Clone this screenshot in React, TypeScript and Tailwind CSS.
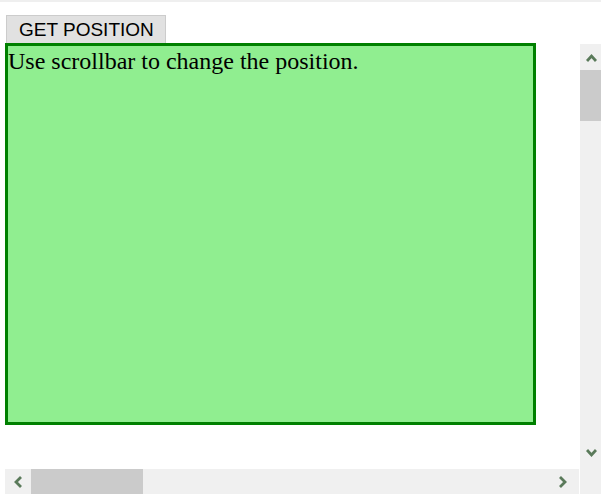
import React from "react";

const A = "#5a7a5a";

function Chev({ dir }: { dir: "up" | "down" | "left" | "right" }) {
  const pts: Record<string, string> = {
    up: "1,8 5.5,3 10,8",
    down: "1,2 5.5,7 10,2",
    left: "7,1 2,6 7,11",
    right: "2,1 7,6 2,11",
  };
  const v = dir === "up" || dir === "down";
  return (
    <svg width={v ? 11 : 9} height={v ? 10 : 12} viewBox={v ? "0 0 11 10" : "0 0 9 12"}>
      <polyline points={pts[dir]} fill="none" stroke={A} strokeWidth="2.8" strokeLinejoin="miter" />
    </svg>
  );
}

export default function App() {
  return (
    <div className="w-[601px] h-[499px] bg-white overflow-hidden border-t-2 border-[#efefef]">
      <div className="pl-[6px] pt-[13px]">
        <button
          className="h-[29px] w-[160px] bg-[#e1e1e1] border border-[#cccccc] text-black text-[19px] leading-none pb-[1px] text-left pl-[12px]"
          style={{ fontFamily: '"Liberation Sans", Arial, sans-serif' }}
        >
          GET POSITION
        </button>
      </div>
      <div className="flex pl-[5px]">
        <div className="flex flex-col w-[574px]">
          <div className="w-[531px] h-[382px] -mt-[1px] bg-[#90ee90] border-[3px] border-[#008000]">
            <p
              className="text-[24px] leading-[28px] text-black pt-[1px]"
              style={{ fontFamily: '"Liberation Serif", "Times New Roman", serif' }}
            >
              Use scrollbar to change the position.
            </p>
          </div>
          <div className="h-[44px]" />
          <div className="h-[25px] bg-[#f0f0f0] flex items-center">
            <div className="w-[26px] h-full flex items-center justify-center pl-[1px]">
              <Chev dir="left" />
            </div>
            <div className="w-[112px] h-full bg-[#cbcbcb]" />
            <div className="flex-1" />
            <div className="w-[26px] h-full flex items-center justify-center pr-[7px]">
              <Chev dir="right" />
            </div>
          </div>
        </div>
        <div className="ml-[1px] w-[21px] h-[450px] bg-[#f0f0f0] flex flex-col">
          <div className="h-[26px] flex items-center justify-center pl-[1px] pt-[2px]">
            <Chev dir="up" />
          </div>
          <div className="h-[51px] bg-[#cbcbcb]" />
          <div className="flex-1" />
          <div className="h-[48px] flex items-start justify-center pl-[1px] pt-[2px]">
            <Chev dir="down" />
          </div>
        </div>
      </div>
    </div>
  );
}
